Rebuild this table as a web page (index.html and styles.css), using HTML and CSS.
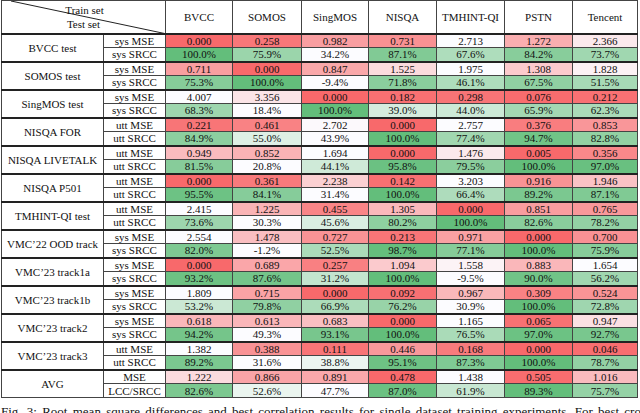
FILE: index.html
```html
<!DOCTYPE html>
<html>
<head>
<meta charset="utf-8">
<link rel="stylesheet" href="styles.css">
</head>
<body>
<table class="results">
  <colgroup>
    <col class="c-set"><col class="c-metric">
    <col class="c-bvcc"><col class="c-somos"><col class="c-sing"><col class="c-nisqa"><col class="c-tmh"><col class="c-pstn"><col class="c-ten">
  </colgroup>
  <thead>
    <tr class="head">
      <th colspan="2" class="diag">
        <svg class="diag-line" width="165" height="33" viewBox="0 0 165 33"><line x1="9" y1="0" x2="165" y2="33" stroke="#222" stroke-width="1"/></svg>
        <span class="train">Train set</span><span class="test">Test set</span>
      </th>
      <th>BVCC</th><th>SOMOS</th><th>SingMOS</th><th>NISQA</th><th>TMHINT-QI</th><th>PSTN</th><th>Tencent</th>
    </tr>
  </thead>
  <tbody>
    <tr class="mse"><th rowspan="2" class="set">BVCC test</th><td class="metric">sys MSE</td><td class="v">0.000</td><td class="v">0.258</td><td class="v">0.982</td><td class="v">0.731</td><td class="v">2.713</td><td class="v">1.272</td><td class="v">2.366</td></tr>
    <tr class="srcc"><td class="metric">sys SRCC</td><td class="v">100.0%</td><td class="v">75.9%</td><td class="v">34.2%</td><td class="v">87.1%</td><td class="v">67.6%</td><td class="v">84.2%</td><td class="v">73.7%</td></tr>
  </tbody>
  <tbody>
    <tr class="mse"><th rowspan="2" class="set">SOMOS test</th><td class="metric">sys MSE</td><td class="v">0.711</td><td class="v">0.000</td><td class="v">0.847</td><td class="v">1.525</td><td class="v">1.975</td><td class="v">1.308</td><td class="v">1.828</td></tr>
    <tr class="srcc"><td class="metric">sys SRCC</td><td class="v">75.3%</td><td class="v">100.0%</td><td class="v">-9.4%</td><td class="v">71.8%</td><td class="v">46.1%</td><td class="v">67.5%</td><td class="v">51.5%</td></tr>
  </tbody>
  <tbody>
    <tr class="mse"><th rowspan="2" class="set">SingMOS test</th><td class="metric">sys MSE</td><td class="v">4.007</td><td class="v">3.356</td><td class="v">0.000</td><td class="v">0.182</td><td class="v">0.298</td><td class="v">0.076</td><td class="v">0.212</td></tr>
    <tr class="srcc"><td class="metric">sys SRCC</td><td class="v">68.3%</td><td class="v">18.4%</td><td class="v">100.0%</td><td class="v">39.0%</td><td class="v">44.0%</td><td class="v">65.9%</td><td class="v">62.3%</td></tr>
  </tbody>
  <tbody>
    <tr class="mse"><th rowspan="2" class="set">NISQA FOR</th><td class="metric">utt MSE</td><td class="v">0.221</td><td class="v">0.461</td><td class="v">2.702</td><td class="v">0.000</td><td class="v">2.757</td><td class="v">0.376</td><td class="v">0.853</td></tr>
    <tr class="srcc"><td class="metric">utt SRCC</td><td class="v">84.9%</td><td class="v">55.0%</td><td class="v">43.9%</td><td class="v">100.0%</td><td class="v">77.4%</td><td class="v">94.7%</td><td class="v">82.8%</td></tr>
  </tbody>
  <tbody>
    <tr class="mse"><th rowspan="2" class="set">NISQA LIVETALK</th><td class="metric">utt MSE</td><td class="v">0.949</td><td class="v">0.852</td><td class="v">1.694</td><td class="v">0.000</td><td class="v">1.476</td><td class="v">0.005</td><td class="v">0.356</td></tr>
    <tr class="srcc"><td class="metric">utt SRCC</td><td class="v">81.5%</td><td class="v">20.8%</td><td class="v">44.1%</td><td class="v">95.8%</td><td class="v">79.5%</td><td class="v">100.0%</td><td class="v">97.0%</td></tr>
  </tbody>
  <tbody>
    <tr class="mse"><th rowspan="2" class="set">NISQA P501</th><td class="metric">utt MSE</td><td class="v">0.000</td><td class="v">0.361</td><td class="v">2.238</td><td class="v">0.142</td><td class="v">3.203</td><td class="v">0.916</td><td class="v">1.946</td></tr>
    <tr class="srcc"><td class="metric">utt SRCC</td><td class="v">95.5%</td><td class="v">84.1%</td><td class="v">31.4%</td><td class="v">100.0%</td><td class="v">66.4%</td><td class="v">89.2%</td><td class="v">87.1%</td></tr>
  </tbody>
  <tbody>
    <tr class="mse"><th rowspan="2" class="set">TMHINT-QI test</th><td class="metric">utt MSE</td><td class="v">2.415</td><td class="v">1.225</td><td class="v">0.455</td><td class="v">1.305</td><td class="v">0.000</td><td class="v">0.851</td><td class="v">0.765</td></tr>
    <tr class="srcc"><td class="metric">utt SRCC</td><td class="v">73.6%</td><td class="v">30.3%</td><td class="v">45.6%</td><td class="v">80.2%</td><td class="v">100.0%</td><td class="v">82.6%</td><td class="v">78.2%</td></tr>
  </tbody>
  <tbody>
    <tr class="mse"><th rowspan="2" class="set">VMC’22 OOD track</th><td class="metric">sys MSE</td><td class="v">2.554</td><td class="v">1.478</td><td class="v">0.727</td><td class="v">0.213</td><td class="v">0.971</td><td class="v">0.000</td><td class="v">0.700</td></tr>
    <tr class="srcc"><td class="metric">sys SRCC</td><td class="v">82.0%</td><td class="v">-1.2%</td><td class="v">52.5%</td><td class="v">98.7%</td><td class="v">77.1%</td><td class="v">100.0%</td><td class="v">75.9%</td></tr>
  </tbody>
  <tbody>
    <tr class="mse"><th rowspan="2" class="set">VMC’23 track1a</th><td class="metric">sys MSE</td><td class="v">0.000</td><td class="v">0.689</td><td class="v">0.257</td><td class="v">1.094</td><td class="v">1.558</td><td class="v">0.883</td><td class="v">1.654</td></tr>
    <tr class="srcc"><td class="metric">sys SRCC</td><td class="v">93.2%</td><td class="v">87.6%</td><td class="v">31.2%</td><td class="v">100.0%</td><td class="v">-9.5%</td><td class="v">90.0%</td><td class="v">56.2%</td></tr>
  </tbody>
  <tbody>
    <tr class="mse"><th rowspan="2" class="set">VMC’23 track1b</th><td class="metric">sys MSE</td><td class="v">1.809</td><td class="v">0.715</td><td class="v">0.000</td><td class="v">0.092</td><td class="v">0.967</td><td class="v">0.309</td><td class="v">0.524</td></tr>
    <tr class="srcc"><td class="metric">sys SRCC</td><td class="v">53.2%</td><td class="v">79.8%</td><td class="v">66.9%</td><td class="v">76.2%</td><td class="v">30.9%</td><td class="v">100.0%</td><td class="v">72.8%</td></tr>
  </tbody>
  <tbody>
    <tr class="mse"><th rowspan="2" class="set">VMC’23 track2</th><td class="metric">sys MSE</td><td class="v">0.618</td><td class="v">0.613</td><td class="v">0.683</td><td class="v">0.000</td><td class="v">1.165</td><td class="v">0.065</td><td class="v">0.947</td></tr>
    <tr class="srcc"><td class="metric">sys SRCC</td><td class="v">94.2%</td><td class="v">49.3%</td><td class="v">93.1%</td><td class="v">100.0%</td><td class="v">76.5%</td><td class="v">97.0%</td><td class="v">92.7%</td></tr>
  </tbody>
  <tbody>
    <tr class="mse"><th rowspan="2" class="set">VMC’23 track3</th><td class="metric">utt MSE</td><td class="v">1.382</td><td class="v">0.388</td><td class="v">0.111</td><td class="v">0.446</td><td class="v">0.168</td><td class="v">0.000</td><td class="v">0.046</td></tr>
    <tr class="srcc"><td class="metric">utt SRCC</td><td class="v">89.2%</td><td class="v">31.6%</td><td class="v">38.8%</td><td class="v">95.1%</td><td class="v">87.3%</td><td class="v">100.0%</td><td class="v">78.7%</td></tr>
  </tbody>
  <tbody>
    <tr class="mse"><th rowspan="2" class="set">AVG</th><td class="metric">MSE</td><td class="v">1.222</td><td class="v">0.866</td><td class="v">0.891</td><td class="v">0.478</td><td class="v">1.438</td><td class="v">0.505</td><td class="v">1.016</td></tr>
    <tr class="srcc"><td class="metric">LCC/SRCC</td><td class="v">82.6%</td><td class="v">52.6%</td><td class="v">47.7%</td><td class="v">87.0%</td><td class="v">61.9%</td><td class="v">89.3%</td><td class="v">75.7%</td></tr>
  </tbody>
</table>
<p class="caption">Fig. 3: Root mean square differences and best correlation results for single dataset training experiments. For best cross-corpus differences, the</p>
<script src="script.js"></script>
</body>
</html>
```

FILE: styles.css
```css
html, body {
  margin: 0;
  padding: 0;
  background: #ffffff;
}
body {
  font-family: "Liberation Serif", "Times New Roman", serif;
  color: #111;
  width: 640px;
  height: 413px;
  overflow: hidden;
}
.results {
  border-collapse: collapse;
  table-layout: fixed;
  width: 636px;
  margin: 0 0 0 1px;
  font-size: 11px;
  line-height: 12px;
}
.c-set { width: 102px; }
.c-metric { width: 62px; }
.c-bvcc { width: 67px; }
.c-somos { width: 69px; }
.c-sing { width: 67px; }
.c-nisqa { width: 68px; }
.c-tmh { width: 68px; }
.c-pstn { width: 68px; }
.c-ten { width: 65px; }

.results th, .results td {
  padding: 0;
  text-align: center;
  vertical-align: middle;
  font-weight: normal;
  border: 1px solid #444;
  white-space: nowrap;
}
.head {
  height: 33px;
}
.head th {
  border-bottom: 2px solid #222;
}
.results tbody {
  border-top: 2px solid #222;
}
.results tbody tr {
  height: 14px;
}
.diag {
  position: relative;
}
.diag-line {
  position: absolute;
  left: 0;
  top: 0;
}
.train, .test {
  display: block;
  line-height: 14px;
  position: relative;
}
.train { margin-left: 2px; }
.set {
  border-right: 1px solid #444;
}
.caption {
  margin: 6px 0 0 1px;
  font-size: 13px;
  line-height: 15px;
  white-space: nowrap;
  word-spacing: 2px;
}
```

FILE: script.js
```js
(function () {
  var white = [252, 252, 255];
  var red = [248, 105, 107];
  var green = [99, 190, 123];
  var rows = document.querySelectorAll('tr.mse, tr.srcc');
  rows.forEach(function (tr) {
    var cells = Array.prototype.slice.call(tr.querySelectorAll('td.v'));
    var vals = cells.map(function (c) { return parseFloat(c.textContent); });
    var min = Math.min.apply(null, vals);
    var max = Math.max.apply(null, vals);
    var isMse = tr.classList.contains('mse');
    var end = isMse ? red : green;
    cells.forEach(function (c, i) {
      var t = (vals[i] - min) / (max - min);
      var f = isMse ? 1 - t : t;
      var rgb = white.map(function (w, k) { return Math.round(w + (end[k] - w) * f); });
      c.style.backgroundColor = 'rgb(' + rgb.join(',') + ')';
    });
  });
})();
```
